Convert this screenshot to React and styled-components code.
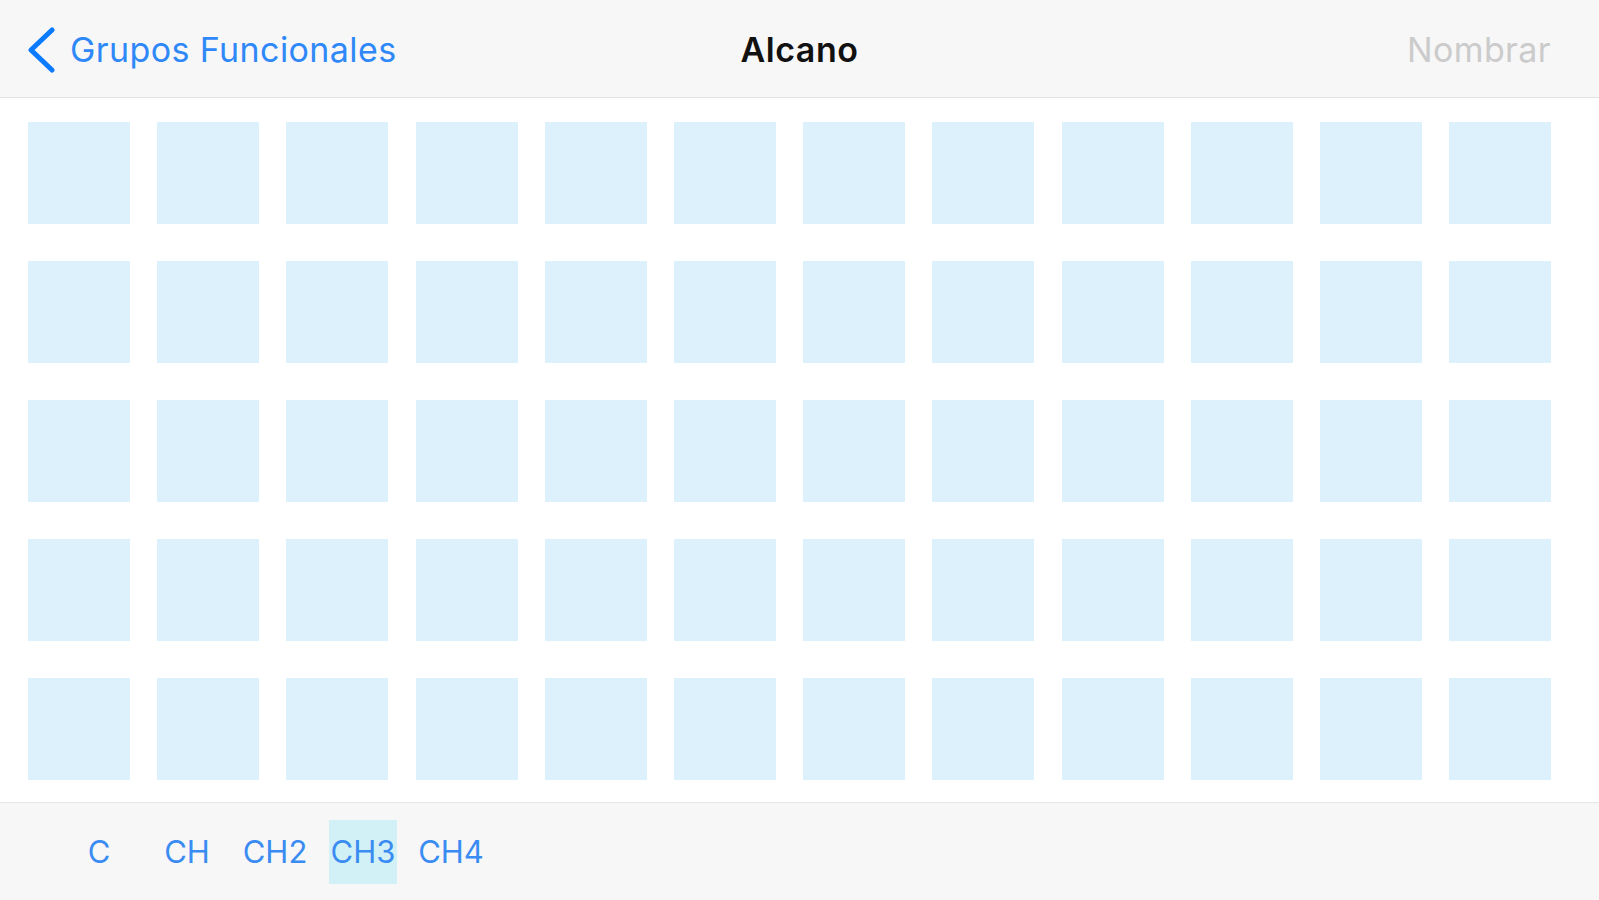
import React from "react";
import styled, { createGlobalStyle } from "styled-components";

const GlobalStyle = createGlobalStyle`
  html, body {
    margin: 0;
    padding: 0;
    height: 100%;
    background: #ffffff;
    font-family: Inter, "Liberation Sans", sans-serif;
  }
  #root {
    height: 100%;
  }
`;

const ROWS = 5;
const COLS = 12;
const TABS = ["C", "CH", "CH2", "CH3", "CH4"];

const App = () => {
  const cells = Array.from({ length: ROWS * COLS }, (_, i) => i);

  return (
    <Screen>
      <GlobalStyle />
      <NavBar>
        <BackButton>
          <svg width="30" height="46" viewBox="0 0 30 46" aria-hidden="true">
            <polyline
              points="25,3 4,23 25,43"
              fill="none"
              stroke="#0a7aff"
              strokeWidth="5"
              strokeLinecap="round"
              strokeLinejoin="round"
            />
          </svg>
          <span>Grupos Funcionales</span>
        </BackButton>
        <Title>Alcano</Title>
        <RightSlot>
          <ActionButton disabled>Nombrar</ActionButton>
        </RightSlot>
      </NavBar>

      <Board>
        <Grid>
          {cells.map((i) => (
            <Slot key={i} />
          ))}
        </Grid>
      </Board>

      <TabBar>
        {TABS.map((t) => (
          <Tab key={t}>
            <TabLabel $active={t === "CH3"}>{t}</TabLabel>
          </Tab>
        ))}
      </TabBar>
    </Screen>
  );
};

const Screen = styled.div`
  display: flex;
  flex-direction: column;
  height: 100vh;
  overflow: hidden;
`;

const NavBar = styled.header`
  display: grid;
  grid-template-columns: 1fr auto 1fr;
  align-items: center;
  height: 98px;
  padding-top: 2px;
  box-sizing: border-box;
  background: #f7f7f7;
  border-bottom: 1px solid #e2e2e2;
  flex-shrink: 0;
`;

const BackButton = styled.div`
  display: flex;
  align-items: center;
  gap: 13px;
  padding-left: 27px;
  color: #2f88f7;
  font-size: 34px;
  letter-spacing: 0.4px;

  svg {
    display: block;
  }
`;

const Title = styled.h1`
  margin: 0;
  font-size: 34px;
  font-weight: 600;
  color: #111111;
  letter-spacing: 0.5px;
`;

const RightSlot = styled.div`
  display: flex;
  justify-content: flex-end;
  padding-right: 48px;
`;

const ActionButton = styled.button`
  border: none;
  background: none;
  padding: 0;
  font-family: inherit;
  font-size: 34px;
  letter-spacing: 0.4px;
  color: #cbcbcb;
`;

const Board = styled.main`
  flex: 1;
  padding: 24px 0 0 28px;
`;

const Grid = styled.div`
  display: grid;
  grid-template-columns: repeat(${COLS}, 102px);
  grid-auto-rows: 102px;
  column-gap: 27.2px;
  row-gap: 37px;
`;

const Slot = styled.div`
  background: #dcf1fc;
`;

const TabBar = styled.nav`
  display: flex;
  align-items: center;
  height: 97px;
  padding-left: 55px;
  background: #f7f7f7;
  border-top: 1px solid #e6e6e6;
  flex-shrink: 0;
`;

const Tab = styled.div`
  display: flex;
  justify-content: center;
  width: 88px;
`;

const TabLabel = styled.span`
  display: flex;
  align-items: center;
  height: 64px;
  padding: 0 2px;
  font-size: 31px;
  color: #3a8cf2;
  background: ${(p) => (p.$active ? "#d2f1f6" : "transparent")};
`;

export default App;
